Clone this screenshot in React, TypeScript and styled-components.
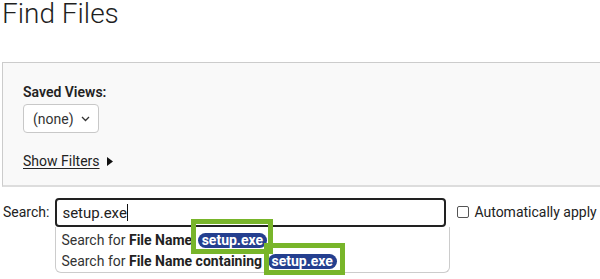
import React from 'react';
import styled, {createGlobalStyle, css} from 'styled-components';

const GlobalStyle = createGlobalStyle`
  html, body {
    margin: 0;
    padding: 0;
    background: #fff;
    overflow: hidden;
  }
  body {
    font-family: Roboto, "Liberation Sans", Arial, sans-serif;
    color: #222;
  }
`

type FrameType = 'first' | 'second'

const Page = styled.div`
  width: 600px;
  height: 279px;
  position: relative;
`

const Title = styled.h1`
  margin: 0;
  padding: 0 0 0 2px;
  height: 62px;
  font-size: 28px;
  font-weight: 300;
  line-height: 27px;
  color: #1f1f1f;
`

const FilterPanel = styled.section`
  margin-left: 2px;
  margin-right: -6px;
  height: 125px;
  box-sizing: border-box;
  background: #f9f9f9;
  border: 1px solid #cccccc;
  border-bottom-width: 2px;
  border-bottom-color: #dddddd;
  padding: 18px 20px 0 20px;
  display: flex;
  flex-direction: column;
`

const FieldLabel = styled.label`
  font-size: 14px;
  font-weight: 600;
  line-height: 20px;
  margin-top: 1px;
  color: #222;
`

const Select = styled.div`
  width: 76px;
  height: 29px;
  box-sizing: border-box;
  margin-top: 2px;
  border: 1px solid #c8c8c8;
  border-radius: 4px;
  background: #fff;
  display: flex;
  align-items: center;
  justify-content: space-between;
  padding: 0 8px 0 9px;
  font-size: 14px;
  color: #333;
`

const ShowFilters = styled.a`
  margin-top: 19px;
  display: flex;
  align-items: center;
  gap: 7px;
  font-size: 14px;
  color: #222;
  line-height: 18px;

  span {
    text-decoration: underline;
    text-underline-offset: 2px;
  }
`

const SearchArea = styled.div`
  display: flex;
  align-items: flex-start;
  margin-top: 11px;
  padding-left: 3px;
`

const SearchLabel = styled.label`
  font-size: 14px;
  line-height: 28px;
  margin-right: 6px;
`

const SearchColumn = styled.div`
  display: flex;
  flex-direction: column;
`

const SearchInput = styled.div`
  width: 391px;
  height: 29px;
  box-sizing: border-box;
  border: 2px solid #222;
  border-radius: 4px;
  background: #fff;
  display: flex;
  align-items: center;
  padding-left: 5px;
  font-size: 15px;
  color: #222;

  i {
    display: inline-block;
    width: 1px;
    height: 17px;
    background: #111;
  }
`

const Suggestions = styled.ul`
  list-style: none;
  margin: 0;
  padding: 3px 0 0 5px;
  width: 395px;
  height: 46px;
  box-sizing: border-box;
  border: 1px solid #cccccc;
  border-top: none;
  border-radius: 0 0 6px 6px;
  background: #fff;
`

const Suggestion = styled.li`
  font-size: 14px;
  line-height: 21px;
  color: #333;
  white-space: nowrap;

  b {
    font-weight: 700;
    color: #222;
  }
`

const Badge = styled.span<{ frame: FrameType }>`
  position: relative;
  display: inline-block;
  background: #243f8f;
  color: #fff;
  font-weight: 700;
  border-radius: 8px;
  padding: 0 4px;
  line-height: 15px;
  margin-left: 2px;

  &::after {
    content: '';
    position: absolute;
    border: 5px solid #78b52a;
    ${props => props.frame === 'first' ? css`
      top: -14px;
      left: -7px;
      right: -6px;
      bottom: -6px;
    ` : css`
      top: -11px;
      left: -4px;
      right: -8px;
      bottom: -6px;
    `}
  }
`

const AutoApply = styled.label`
  display: flex;
  align-items: center;
  gap: 5px;
  margin-left: 7px;
  margin-top: 6px;
  font-size: 14px;
  color: #222;
  white-space: nowrap;
`

const CheckBox = styled.span`
  width: 12px;
  height: 12px;
  box-sizing: border-box;
  border: 1px solid #555;
  border-radius: 2px;
  background: #fff;
`

export default function App() {
    return (
        <Page>
            <GlobalStyle/>
            <Title>Find Files</Title>
            <FilterPanel>
                <FieldLabel>Saved Views:</FieldLabel>
                <Select>
                    <span>(none)</span>
                    <svg width="9" height="6" viewBox="0 0 9 6">
                        <path d="M1 1l3.5 3.5L8 1" fill="none" stroke="#333" strokeWidth="1.3"/>
                    </svg>
                </Select>
                <ShowFilters>
                    <span>Show Filters</span>
                    <svg width="6" height="9" viewBox="0 0 6 9">
                        <path d="M0 0l6 4.5L0 9z" fill="#111"/>
                    </svg>
                </ShowFilters>
            </FilterPanel>
            <SearchArea>
                <SearchLabel>Search:</SearchLabel>
                <SearchColumn>
                    <SearchInput>setup.exe<i/></SearchInput>
                    <Suggestions>
                        <Suggestion>Search for <b>File Name</b> <Badge frame="first">setup.exe</Badge></Suggestion>
                        <Suggestion>Search for <b>File Name containing</b> <Badge frame="second">setup.exe</Badge></Suggestion>
                    </Suggestions>
                </SearchColumn>
                <AutoApply>
                    <CheckBox/>
                    Automatically apply
                </AutoApply>
            </SearchArea>
        </Page>
    );
}
